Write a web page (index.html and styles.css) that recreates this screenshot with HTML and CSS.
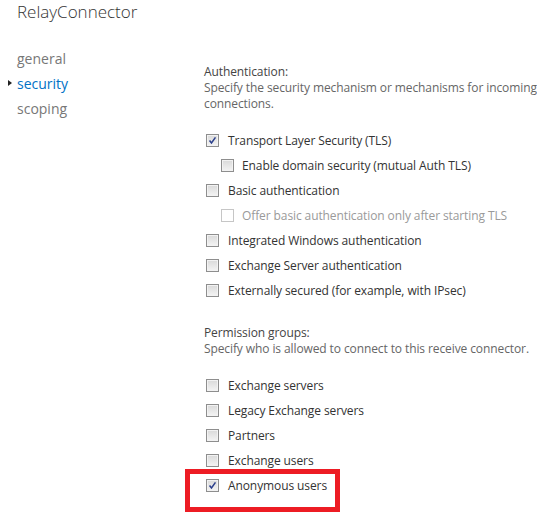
FILE: index.html
```html
<!DOCTYPE html>
<html lang="en">
<head>
    <meta charset="UTF-8">
    <meta name="viewport" content="width=device-width, initial-scale=1.0">
    <title>RelayConnector</title>
    <link rel="stylesheet" href="styles.css">
</head>
<body>
    <h1 class="title">RelayConnector</h1>

    <div class="layout">
        <ul class="nav">
            <li>general</li>
            <li class="active">security</li>
            <li>scoping</li>
        </ul>

        <div class="content">
            <div class="section-head">
                <p class="heading">Authentication:</p>
                <p class="hint">Specify the security mechanism or mechanisms for incoming connections.</p>
            </div>
            <ul class="options">
                <li class="option"><span class="box checked"><svg viewBox="0 0 13 13"><path d="M3 6.5 L5.3 9.5 L10 2.8" /></svg></span>Transport Layer Security (TLS)</li>
                <li class="option sub"><span class="box"></span>Enable domain security (mutual Auth TLS)</li>
                <li class="option"><span class="box"></span>Basic authentication</li>
                <li class="option sub disabled"><span class="box"></span>Offer basic authentication only after starting TLS</li>
                <li class="option"><span class="box"></span>Integrated Windows authentication</li>
                <li class="option"><span class="box"></span>Exchange Server authentication</li>
                <li class="option"><span class="box"></span>Externally secured (for example, with IPsec)</li>
            </ul>

            <div class="section-head">
                <p class="heading">Permission groups:</p>
                <p class="hint">Specify who is allowed to connect to this receive connector.</p>
            </div>
            <ul class="options">
                <li class="option"><span class="box"></span>Exchange servers</li>
                <li class="option"><span class="box"></span>Legacy Exchange servers</li>
                <li class="option"><span class="box"></span>Partners</li>
                <li class="option"><span class="box"></span>Exchange users</li>
                <li class="option marked"><span class="box checked"><svg viewBox="0 0 13 13"><path d="M3 6.5 L5.3 9.5 L10 2.8" /></svg></span>Anonymous users</li>
            </ul>
        </div>
    </div>
</body>
</html>
```

FILE: styles.css
```css
/* General */
body {
    margin: 0;
    background: #fff;
    color: #333;
    font-family: "Segoe UI", "Open Sans", sans-serif;
}

p, ul {
    margin: 0;
    padding: 0;
}

ul {
    list-style: none;
}

.title {
    margin: 0;
    padding-left: 17px;
    font-size: 17px;
    line-height: 24px;
    font-weight: 300;
    color: #333;
}

.layout {
    display: flex;
}

/* Left navigation */
.nav {
    width: 204px;
    padding: 22px 0 0 17px;
    box-sizing: border-box;
}

.nav li {
    position: relative;
    font-size: 14px;
    line-height: 25px;
    color: #777;
}

.nav li.active {
    color: #0072c6;
}

.nav li.active::before {
    content: "";
    position: absolute;
    left: -9px;
    top: 9px;
    border-left: 4px solid #222;
    border-top: 3.5px solid transparent;
    border-bottom: 3.5px solid transparent;
}

/* Right side */
.content {
    padding-top: 40px;
    font-size: 12px;
    letter-spacing: -0.1px;
}

.section-head {
    line-height: 16px;
    width: 333px;
}

.heading {
    color: #444;
}

.hint {
    color: #666;
}

.options {
    margin: 16px 0 22px;
}

.option {
    position: relative;
    display: flex;
    align-items: center;
    height: 25px;
    padding-left: 2px;
    color: #333;
}

.option.sub {
    padding-left: 17px;
}

.option.sub .box {
    margin-right: 8px;
}

.box {
    width: 13px;
    height: 13px;
    margin-right: 9px;
    box-sizing: border-box;
    border: 1px solid #8e8e8e;
    background: linear-gradient(#d9d9d9, #f4f4f4);
    box-shadow: inset 0 0 0 1px #f2f2f2;
}

.box svg {
    display: block;
    width: 11px;
    height: 11px;
}

.box svg path {
    fill: none;
    stroke: #2b3f8c;
    stroke-width: 1.8;
}

.option.disabled {
    color: #9a9a9a;
}

.option.disabled .box {
    border-color: #c6c6c6;
    background: #fff;
    box-shadow: none;
}

/* red annotation frame */
.option.marked::after {
    content: "";
    position: absolute;
    left: -19px;
    top: -4px;
    width: 155px;
    height: 43px;
    box-sizing: border-box;
    border: 5px solid #ed1c24;
}
```
